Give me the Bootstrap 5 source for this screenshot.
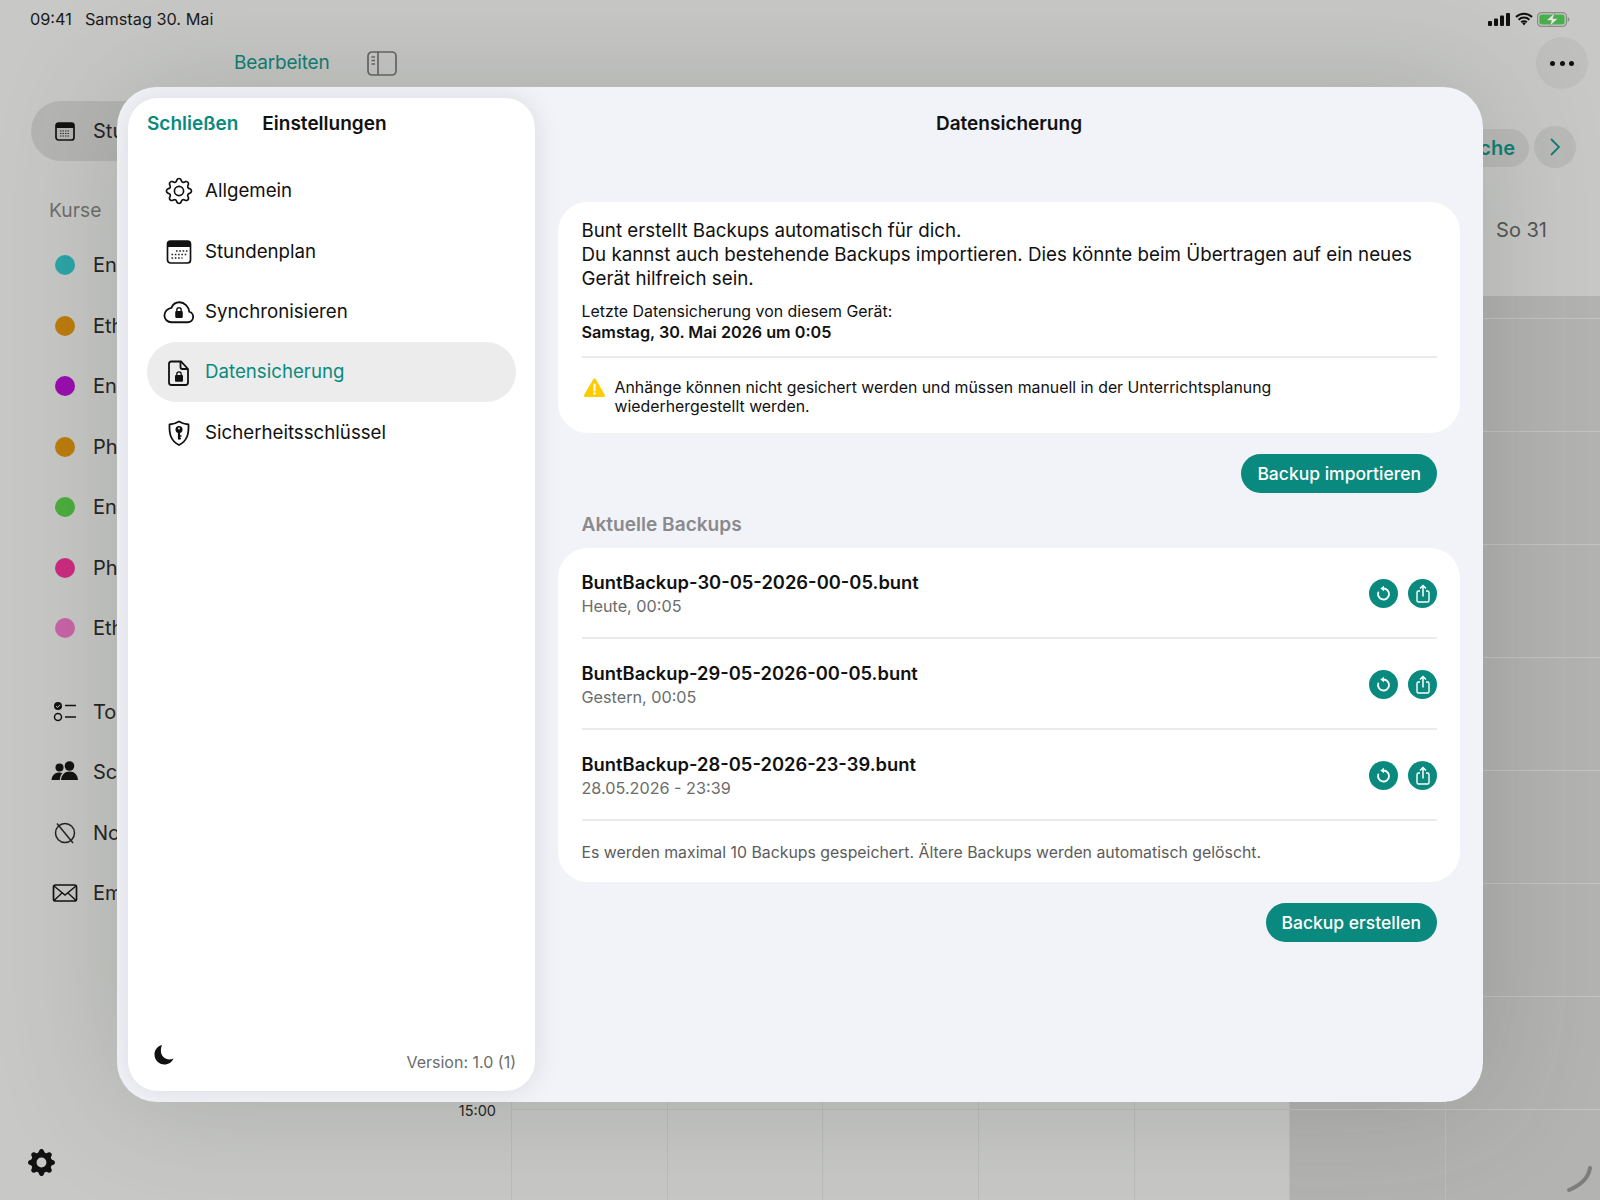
<!DOCTYPE html>
<html lang="de">
<head>
  <meta charset="UTF-8">
  <title>Datensicherung</title>
  <link href="https://cdn.jsdelivr.net/npm/bootstrap@5.3.0/dist/css/bootstrap.min.css" rel="stylesheet" />
  <style>
    html, body { margin: 0; background: #c8c9c7; }
    body { font-family: Inter, "Liberation Sans", sans-serif; color: #111; }
    .screen { position: relative; width: 1600px; height: 1200px; overflow: hidden; background: #c8c9c7; }

    /* dimmed app behind the sheet */
    .statusbar { height: 38px; padding: 0 30px; font-size: 16.300px; color: #1a1a1a; }
    .statusbar .day { margin-left: 13px; }
    .status-icons { gap: 4px; }
    .bg-row { height: 1162px; }
    .bg-side { width: 440px; position: relative; }
    .bg-top { height: 50px; padding-left: 234px; gap: 38px; color: #0d7f74; font-size: 19px; letter-spacing: -.2px; }
    .bg-selected { margin: 13px 0 0 31px; height: 60px; width: 380px; border-radius: 30px; background: #b5b6b4; padding-left: 24px; gap: 18px; font-size: 20px; color: #222; }
    .bg-heading { margin: 37px 0 0 49px; font-size: 19.300px; color: #6e6f6e; height: 24px; line-height: 24px; }
    .bg-courses { margin: 13px 0 0 55px; }
    .bg-item { height: 60.500px; gap: 18px; font-size: 20px; color: #222; }
    .dot { width: 20px; height: 20px; border-radius: 50%; flex: none; }
    .bg-tools { margin: 23px 0 0 50px; }
    .bg-tools .bg-item { gap: 13px; }
    .bg-tools svg { width: 30px; height: 30px; flex: none; }
    .bg-gear { position: absolute; left: 28px; bottom: 24px; }
    .bg-cal { width: 1160px; position: relative; }
    .more-btn { position: absolute; right: 12px; top: -1px; width: 52px; height: 52px; border-radius: 50%; background: #bfc0be; gap: 4.500px; }
    .more-btn i { width: 5px; height: 5px; border-radius: 50%; background: #111; }
    .week-btn { position: absolute; right: 71px; top: 91px; height: 38px; width: 90px; border-radius: 19px; background: #babbb9; color: #0d7f74; font-size: 20px; font-weight: 600; padding-right: 14px; }
    .next-btn { position: absolute; right: 24px; top: 88px; width: 42px; height: 42px; border-radius: 50%; background: #babbb9; }
    .day-label { position: absolute; right: 53px; top: 177px; font-size: 20px; color: #555; }
    .cal-head { height: 258px; }
    .cal-body { height: 904px; }
    .hours-col { width: 71px; position: relative; }
    .time-label { position: absolute; right: 15px; top: 804px; font-size: 14.500px; color: #222; }
    .work-area { width: 778px; background:
      repeating-linear-gradient(to right, #bbbdb9 0 1px, transparent 1px 155.700px),
      repeating-linear-gradient(to bottom, transparent 0 22px, #bbbdb9 22px 23px, transparent 23px 113px); }
    .rest-area { flex: 1; background:
      repeating-linear-gradient(to right, #bcbcba 0 1px, transparent 1px 155.700px),
      repeating-linear-gradient(to bottom, transparent 0 22px, #c4c4c2 22px 23px, transparent 23px 113px),
      #b3b3b2; }
    .corner-mark { position: absolute; right: 4px; bottom: 4px; }

    /* sheet */
    .sheet { position: absolute; left: 117px; top: 87px; width: 1366px; height: 1015px; border-radius: 40px; background: #f2f3f8; box-shadow: 0 0 120px rgba(60,65,50,.22); overflow: hidden; }
    .side-panel { width: 407px; height: 993px; margin: 11px 0 0 11px; border-radius: 30px; background: #fff; box-shadow: 0 0 28px rgba(0,0,0,.1); padding: 0 19px; flex: none; }
    .side-head { height: 52px; gap: 24px; font-size: 19px; font-weight: 600; }
    .teal { color: #0a8a7e; }
    .side-menu { margin-top: 10px; }
    .side-link { height: 60.500px; padding: 2px 0 0 17px; gap: 11px; color: #111; font-size: 18.700px; border-radius: 30px; }
    .side-link:hover { color: #111; }
    .side-link svg { width: 30px; height: 30px; flex: none; }
    .side-link.picked { background: #ececec; color: #0a8a7e; height: 60px; }
    .side-foot { font-size: 16px; color: #6c6c6c; padding: 0 0 17px 6px; }
    .side-foot svg { margin-bottom: 8px; }

    .pane { flex: 1; padding: 0 23px; min-width: 0; }
    .pane-title { height: 72px; padding-top: 25px; line-height: 24px; font-size: 19px; font-weight: 600; margin: 0; }
    .sheet-card { border: 0; border-radius: 30px; background: #fff; }
    .intro-card { margin-top: 43px; height: 231px; padding: 17px 23px 0 23.500px; }
    .intro-text { font-size: 18.750px; line-height: 24px; margin: 0 0 11px; }
    .small-text { font-size: 15.900px; line-height: 20px; margin: 0; }
    .small-text strong { font-size: 16.200px; }
    .rule { height: 2px; background: #ebebed; margin: 13px 0 0; }
    .warn-row { margin-top: 19.500px; gap: 10px; }
    .warn-row svg { margin: 0 0 0 2px; flex: none; }
    .warn-row .small-text { font-size: 15.850px; line-height: 19.500px; }
    .action-btn { background: #0a8a7e; color: #fff; border: 0; border-radius: 20px; height: 39px; font-size: 17.500px; font-weight: 500; padding: 1px 16px 0; }
    .action-btn:hover { background: #0a8a7e; color: #fff; }
    .btn-line { padding-right: 23px; margin-top: 21px; }
    .list-title { margin: 19px 0 0 23.500px; height: 24px; line-height: 24px; font-size: 19.100px; font-weight: 600; color: #8a8a8e; }
    .backup-card { margin-top: 12px; height: 334px; padding: 0 23px 0 23.500px; }
    .backup-row { height: 91px; border-bottom: 2px solid #ebebed; padding-top: 23px; }
    .backup-name { font-size: 18.350px; font-weight: 600; line-height: 23px; }
    .backup-date { font-size: 16.200px; line-height: 24px; color: #6c6c6c; }
    .round-btn { width: 29px; height: 29px; border-radius: 50%; background: #0a8a7e; flex: none; margin-top: 8px; }
    .btn-pair { gap: 10px; }
    .backup-note { font-size: 15.850px; color: #5c5c5c; padding-top: 22px; line-height: 20px; margin: 0; }
  </style>
</head>
<body>
<div class="screen">

  <!-- app behind -->
  <div class="statusbar d-flex align-items-center justify-content-between">
    <div><span>09:41</span><span class="day">Samstag 30. Mai</span></div>
    <div class="status-icons d-flex align-items-center">
      <svg width="23" height="14" viewBox="0 0 23 14"><rect x="0" y="9" width="4" height="5" rx="1" fill="#111"/><rect x="6" y="6.500" width="4" height="7.500" rx="1" fill="#111"/><rect x="12" y="3.500" width="4" height="10.500" rx="1" fill="#111"/><rect x="18" y="1" width="4" height="13" rx="1" fill="#111"/></svg>
      <svg width="18" height="14" viewBox="0 0 18 14"><path d="M1 5a11.500 11.500 0 0 1 16 0M3.600 7.700a7.800 7.800 0 0 1 10.800 0M6.200 10.300a4 4 0 0 1 5.600 0" fill="none" stroke="#111" stroke-width="2"/><path d="M7.200 11.200 9 13.400l1.800-2.200a2.600 2.600 0 0 0-3.600 0z" fill="#111"/></svg>
      <svg width="33" height="15" viewBox="0 0 33 15"><rect x=".6" y=".6" width="28.800" height="13.800" rx="4" fill="none" stroke="#8b8c8a" stroke-width="1.200"/><rect x="2.400" y="2.400" width="25.200" height="10.200" rx="2.400" fill="#46b04a"/><path d="M30.600 5v5c1.200-.4 1.800-1.400 1.800-2.500S31.800 5.400 30.600 5z" fill="#8b8c8a"/><path d="M18 .5 9.500 8.500H14.500L12.500 14.500 21 6.500H16z" fill="#e4e8df" stroke="#6f8f68" stroke-width=".6"/></svg>
    </div>
  </div>

  <div class="bg-row d-flex">
    <div class="bg-side">
      <div class="bg-top d-flex align-items-center">
        <span>Bearbeiten</span>
        <svg width="30" height="25" viewBox="0 0 30 25"><rect x="1" y="1" width="28" height="23" rx="4" fill="none" stroke="#666" stroke-width="1.700"/><path d="M11 1v23" stroke="#666" stroke-width="1.700"/><path d="M4.500 6h3.500M4.500 9.500h3.500M4.500 13h3.500" stroke="#666" stroke-width="1.500"/></svg>
      </div>
      <div class="bg-selected d-flex align-items-center">
        <svg width="20" height="19" viewBox="0 0 20 19"><rect x="1" y="1" width="18" height="17" rx="2.500" fill="none" stroke="#111" stroke-width="1.700"/><rect x="1" y="1" width="18" height="5" fill="#111"/><path d="M5 9h10M5 11.500h10M5 14h10" stroke="#333" stroke-width="1.200" stroke-dasharray="1.500 1"/></svg>
        <span>Stu</span>
      </div>
      <div class="bg-heading">Kurse</div>
      <div class="bg-courses">
        <div class="bg-item d-flex align-items-center"><span class="dot" style="background:#2aa5a8"></span>En</div>
        <div class="bg-item d-flex align-items-center"><span class="dot" style="background:#bd7c0c"></span>Eth</div>
        <div class="bg-item d-flex align-items-center"><span class="dot" style="background:#9a0cb0"></span>En</div>
        <div class="bg-item d-flex align-items-center"><span class="dot" style="background:#bd7c0c"></span>Ph</div>
        <div class="bg-item d-flex align-items-center"><span class="dot" style="background:#4bae3c"></span>En</div>
        <div class="bg-item d-flex align-items-center"><span class="dot" style="background:#cc2a7f"></span>Ph</div>
        <div class="bg-item d-flex align-items-center"><span class="dot" style="background:#c964a8"></span>Eth</div>
      </div>
      <div class="bg-tools">
        <div class="bg-item d-flex align-items-center">
          <svg viewBox="0 0 30 30"><circle cx="8" cy="9" r="4" fill="#111"/><path d="M6 9l1.500 1.500L10 7.800" stroke="#c8c9c7" stroke-width="1" fill="none"/><circle cx="8" cy="20" r="3.500" fill="none" stroke="#111" stroke-width="1.500"/><path d="M15 8.500h11M15 20h11" stroke="#111" stroke-width="1.500"/></svg>
          <span>To-</span>
        </div>
        <div class="bg-item d-flex align-items-center">
          <svg viewBox="0 0 30 30"><circle cx="9.500" cy="10.500" r="4" fill="#111"/><circle cx="19.500" cy="9" r="4.800" fill="#111"/><path d="M1.500 23c.500-5 3.500-7.500 8-7.500 1 0 2 .2 2.800.500-1.500 1.800-2.300 4.200-2.500 7z" fill="#111"/><path d="M11 23c.600-5.500 3.700-8.500 8.500-8.500S27.500 17.500 28 23z" fill="#111"/></svg>
          <span>Sc</span>
        </div>
        <div class="bg-item d-flex align-items-center">
          <svg viewBox="0 0 30 30"><circle cx="15" cy="15" r="9.500" fill="none" stroke="#222" stroke-width="1.500"/><path d="M7 5.500 23 25" stroke="#222" stroke-width="1.500"/></svg>
          <span>No</span>
        </div>
        <div class="bg-item d-flex align-items-center">
          <svg viewBox="0 0 30 30"><rect x="3.500" y="7" width="23" height="16" rx="2" fill="none" stroke="#111" stroke-width="1.700"/><path d="M4 8l11 9 11-9M4 22.500l8-7.500M26 22.500 18 15" fill="none" stroke="#111" stroke-width="1.400"/></svg>
          <span>Em</span>
        </div>
      </div>
      <svg class="bg-gear" width="27" height="27" viewBox="0 0 16 16"><path fill="#111" d="M9.405 1.050c-.413-1.400-2.397-1.400-2.810 0l-.1.340a1.464 1.464 0 0 1-2.105.872l-.31-.17c-1.283-.698-2.686.705-1.987 1.987l.169.311c.446.820.023 1.841-.872 2.105l-.34.1c-1.400.413-1.400 2.397 0 2.810l.34.1a1.464 1.464 0 0 1 .872 2.105l-.17.31c-.698 1.283.705 2.686 1.987 1.987l.311-.169a1.464 1.464 0 0 1 2.105.872l.1.340c.413 1.400 2.397 1.400 2.810 0l.1-.34a1.464 1.464 0 0 1 2.105-.872l.31.170c1.283.698 2.686-.705 1.987-1.987l-.169-.311a1.464 1.464 0 0 1 .872-2.105l.34-.1c1.400-.413 1.400-2.397 0-2.810l-.34-.1a1.464 1.464 0 0 1-.872-2.105l.17-.31c.698-1.283-.705-2.686-1.987-1.987l-.311.169a1.464 1.464 0 0 1-2.105-.872l-.1-.34zM8 10.930a2.929 2.929 0 1 1 0-5.860 2.929 2.929 0 0 1 0 5.858z"/></svg>
    </div>
    <div class="bg-cal">
      <div class="cal-head"></div>
      <div class="cal-body d-flex">
        <div class="hours-col"><span class="time-label">15:00</span></div>
        <div class="work-area"></div>
        <div class="rest-area"></div>
      </div>
      <div class="more-btn d-flex align-items-center justify-content-center"><i></i><i></i><i></i></div>
      <div class="week-btn d-flex align-items-center justify-content-end">che</div>
      <div class="next-btn d-flex align-items-center justify-content-center">
        <svg width="14" height="20" viewBox="0 0 14 20"><path d="M3 2l8 8-8 8" fill="none" stroke="#0d7f74" stroke-width="1.800"/></svg>
      </div>
      <div class="day-label">So 31</div>
    </div>
  </div>
  <svg class="corner-mark" width="32" height="32" viewBox="0 0 32 32"><path d="M26 3c-1.500 10-9 17-21 22" transform="translate(0 1)" fill="none" stroke="#7c7d7c" stroke-width="4" stroke-linecap="round"/></svg>

  <!-- settings sheet -->
  <div class="sheet d-flex">
    <aside class="side-panel d-flex flex-column">
      <div class="side-head d-flex align-items-center">
        <span class="teal">Schließen</span>
        <span>Einstellungen</span>
      </div>
      <nav class="side-menu nav flex-column">
        <a class="side-link nav-link d-flex align-items-center" href="#">
          <svg viewBox="-1 -1 18 18"><path fill="#111" d="M8 4.754a3.246 3.246 0 1 0 0 6.492 3.246 3.246 0 0 0 0-6.492zM5.754 8a2.246 2.246 0 1 1 4.492 0 2.246 2.246 0 0 1-4.492 0z"/><path fill="#111" d="M9.796 1.343c-.527-1.790-3.065-1.790-3.592 0l-.094.319a.873.873 0 0 1-1.255.520l-.292-.16c-1.640-.892-3.433.902-2.540 2.541l.159.292a.873.873 0 0 1-.520 1.255l-.319.094c-1.790.527-1.790 3.065 0 3.592l.319.094a.873.873 0 0 1 .520 1.255l-.16.292c-.892 1.640.901 3.434 2.541 2.540l.292-.159a.873.873 0 0 1 1.255.520l.094.319c.527 1.790 3.065 1.790 3.592 0l.094-.319a.873.873 0 0 1 1.255-.520l.292.160c1.640.893 3.434-.902 2.540-2.541l-.159-.292a.873.873 0 0 1 .520-1.255l.319-.094c1.790-.527 1.790-3.065 0-3.592l-.319-.094a.873.873 0 0 1-.520-1.255l.160-.292c.893-1.640-.902-3.433-2.541-2.540l-.292.159a.873.873 0 0 1-1.255-.520l-.094-.319zm-2.633.283c.246-.835 1.428-.835 1.674 0l.094.319a1.873 1.873 0 0 0 2.693 1.115l.291-.160c.764-.415 1.600.420 1.184 1.185l-.159.292a1.873 1.873 0 0 0 1.116 2.692l.318.094c.835.246.835 1.428 0 1.674l-.319.094a1.873 1.873 0 0 0-1.115 2.693l.160.291c.415.764-.420 1.600-1.185 1.184l-.291-.159a1.873 1.873 0 0 0-2.693 1.116l-.094.318c-.246.835-1.428.835-1.674 0l-.094-.319a1.873 1.873 0 0 0-2.692-1.115l-.292.160c-.764.415-1.600-.420-1.184-1.185l.159-.291A1.873 1.873 0 0 0 1.945 8.930l-.319-.094c-.835-.246-.835-1.428 0-1.674l.319-.094A1.873 1.873 0 0 0 3.060 4.377l-.160-.292c-.415-.764.420-1.600 1.185-1.184l.292.159a1.873 1.873 0 0 0 2.692-1.115l.094-.319z"/></svg>
          <span>Allgemein</span>
        </a>
        <a class="side-link nav-link d-flex align-items-center" href="#">
          <svg viewBox="0 0 30 30"><rect x="3.500" y="4" width="23" height="22" rx="3" fill="none" stroke="#111" stroke-width="1.700"/><path d="M3.500 7a3 3 0 0 1 3-3h17a3 3 0 0 1 3 3v3h-23z" fill="#111"/><path d="M12 14h12M7.500 17.500h16.500M7.500 21h11" stroke="#222" stroke-width="1.600" stroke-dasharray="1.600 1.700"/></svg>
          <span>Stundenplan</span>
        </a>
        <a class="side-link nav-link d-flex align-items-center" href="#">
          <svg viewBox="0 0 30 30" style="transform:scale(1.08)"><path d="M8 24.500h15a5 5 0 0 0 1.500-9.800C24 10 20 6 15.500 6c-3.500 0-6.300 2-7.500 5.200-3.500.500-6.500 3.300-6.500 7 0 3.400 2.800 6.300 6.500 6.300z" fill="none" stroke="#111" stroke-width="1.700"/><rect x="11.500" y="14" width="7" height="6.500" rx="1" fill="#111"/><path d="M13 14.500v-1.500a2 2 0 0 1 4 0v1.500" fill="none" stroke="#111" stroke-width="1.300"/></svg>
          <span>Synchronisieren</span>
        </a>
        <a class="side-link picked nav-link d-flex align-items-center" href="#">
          <svg viewBox="0 0 30 30"><path d="M7 3.500h10l7 7.500v13.500a2.500 2.500 0 0 1-2.500 2.500h-14a2.500 2.500 0 0 1-2.500-2.500V6a2.500 2.500 0 0 1 2-2.500z" fill="none" stroke="#111" stroke-width="1.800"/><path d="M16.500 3.500V9a2 2 0 0 0 2 2h5.500" fill="none" stroke="#111" stroke-width="1.800"/><rect x="11" y="17" width="8" height="6.800" rx="1" fill="#111"/><path d="M12.800 17.500v-1.500a2.200 2.200 0 0 1 4.400 0v1.500" fill="none" stroke="#111" stroke-width="1.300"/></svg>
          <span>Datensicherung</span>
        </a>
        <a class="side-link nav-link d-flex align-items-center" href="#">
          <svg viewBox="0 0 30 30"><path d="M15 3.500c3 1.800 6 2.700 9.500 3 .3 8.500-.6 16-9.500 20.500C6.100 22.500 5.200 15 5.500 6.500c3.500-.3 6.500-1.200 9.500-3z" fill="none" stroke="#111" stroke-width="1.800" stroke-linejoin="round"/><circle cx="15" cy="11.500" r="3.500" fill="#111"/><path d="M15 13v8.500" stroke="#111" stroke-width="2.200"/><path d="M15 18h2.500M15 20.500h2" stroke="#111" stroke-width="1.300"/><circle cx="15" cy="10.500" r=".9" fill="#fff"/></svg>
          <span>Sicherheitsschlüssel</span>
        </a>
      </nav>
      <div class="side-foot mt-auto d-flex align-items-end justify-content-between">
        <svg width="22" height="22" viewBox="0 0 22 22"><path d="M9 1C4.500 2 1.500 6 1.500 10.500c0 5.500 4.400 10 10 10 4 0 7.500-2.300 9-6-1 .5-2.500.9-3.800.9-5 0-8.800-3.800-8.800-8.500C7.900 4.700 8.300 2.600 9 1z" fill="#111"/></svg>
        <span>Version: 1.0 (1)</span>
      </div>
    </aside>

    <main class="pane">
      <h1 class="pane-title text-center">Datensicherung</h1>

      <section class="sheet-card intro-card card">
        <p class="intro-text">Bunt erstellt Backups automatisch für dich.<br>Du kannst auch bestehende Backups importieren. Dies könnte beim Übertragen auf ein neues Gerät hilfreich sein.</p>
        <p class="small-text">Letzte Datensicherung von diesem Gerät:<br><strong class="fw-semibold">Samstag, 30. Mai 2026 um 0:05</strong></p>
        <div class="rule"></div>
        <div class="warn-row d-flex">
          <svg width="21" height="20" viewBox="0 0 21 20"><path d="M10.500 2 19.500 17.500H1.500z" fill="#ffcc00" stroke="#ffcc00" stroke-width="3" stroke-linejoin="round"/><path d="M10.500 6.500v6" stroke="#fff" stroke-width="2" stroke-linecap="round"/><circle cx="10.500" cy="15.500" r="1.200" fill="#fff"/></svg>
          <p class="small-text">Anhänge können nicht gesichert werden und müssen manuell in der Unterrichtsplanung<br>wiederhergestellt werden.</p>
        </div>
      </section>

      <div class="btn-line d-flex justify-content-end">
        <button class="action-btn btn" type="button">Backup importieren</button>
      </div>

      <div class="list-title">Aktuelle Backups</div>

      <section class="sheet-card backup-card card">
        <div class="backup-row d-flex justify-content-between">
          <div><div class="backup-name">BuntBackup-30-05-2026-00-05.bunt</div><div class="backup-date">Heute, 00:05</div></div>
          <div class="btn-pair d-flex">
            <span class="round-btn d-flex align-items-center justify-content-center"><svg width="18" height="18" viewBox="0 0 18 18"><path d="M8.500 3.500a5.500 5.500 0 1 1-5.200 3.800" fill="none" stroke="#fff" stroke-width="1.800" stroke-linecap="round"/><path d="M9 .800v5.400L5.300 3.500z" fill="#fff"/></svg></span>
            <span class="round-btn d-flex align-items-center justify-content-center"><svg width="18" height="20" viewBox="0 0 18 20"><path d="M6 7H4.500A1.500 1.500 0 0 0 3 8.500v8A1.500 1.500 0 0 0 4.500 18h9a1.500 1.500 0 0 0 1.500-1.500v-8A1.500 1.500 0 0 0 13.500 7H12" fill="none" stroke="#fff" stroke-width="1.400"/><path d="M9 12.500V2M6 4.500 9 1.500l3 3" fill="none" stroke="#fff" stroke-width="1.500"/></svg></span>
          </div>
        </div>
        <div class="backup-row d-flex justify-content-between">
          <div><div class="backup-name">BuntBackup-29-05-2026-00-05.bunt</div><div class="backup-date">Gestern, 00:05</div></div>
          <div class="btn-pair d-flex">
            <span class="round-btn d-flex align-items-center justify-content-center"><svg width="18" height="18" viewBox="0 0 18 18"><path d="M8.500 3.500a5.500 5.500 0 1 1-5.200 3.800" fill="none" stroke="#fff" stroke-width="1.800" stroke-linecap="round"/><path d="M9 .800v5.400L5.300 3.500z" fill="#fff"/></svg></span>
            <span class="round-btn d-flex align-items-center justify-content-center"><svg width="18" height="20" viewBox="0 0 18 20"><path d="M6 7H4.500A1.500 1.500 0 0 0 3 8.500v8A1.500 1.500 0 0 0 4.500 18h9a1.500 1.500 0 0 0 1.500-1.500v-8A1.500 1.500 0 0 0 13.500 7H12" fill="none" stroke="#fff" stroke-width="1.400"/><path d="M9 12.500V2M6 4.500 9 1.500l3 3" fill="none" stroke="#fff" stroke-width="1.500"/></svg></span>
          </div>
        </div>
        <div class="backup-row d-flex justify-content-between">
          <div><div class="backup-name">BuntBackup-28-05-2026-23-39.bunt</div><div class="backup-date">28.05.2026 - 23:39</div></div>
          <div class="btn-pair d-flex">
            <span class="round-btn d-flex align-items-center justify-content-center"><svg width="18" height="18" viewBox="0 0 18 18"><path d="M8.500 3.500a5.500 5.500 0 1 1-5.200 3.800" fill="none" stroke="#fff" stroke-width="1.800" stroke-linecap="round"/><path d="M9 .800v5.400L5.300 3.500z" fill="#fff"/></svg></span>
            <span class="round-btn d-flex align-items-center justify-content-center"><svg width="18" height="20" viewBox="0 0 18 20"><path d="M6 7H4.500A1.500 1.500 0 0 0 3 8.500v8A1.500 1.500 0 0 0 4.500 18h9a1.500 1.500 0 0 0 1.500-1.500v-8A1.500 1.500 0 0 0 13.500 7H12" fill="none" stroke="#fff" stroke-width="1.400"/><path d="M9 12.500V2M6 4.500 9 1.500l3 3" fill="none" stroke="#fff" stroke-width="1.500"/></svg></span>
          </div>
        </div>
        <p class="backup-note">Es werden maximal 10 Backups gespeichert. Ältere Backups werden automatisch gelöscht.</p>
      </section>

      <div class="btn-line d-flex justify-content-end">
        <button class="action-btn btn" type="button">Backup erstellen</button>
      </div>
    </main>
  </div>
</div>
<script src="https://cdn.jsdelivr.net/npm/bootstrap@5.3.0/dist/js/bootstrap.bundle.min.js"></script>
</body>
</html>
